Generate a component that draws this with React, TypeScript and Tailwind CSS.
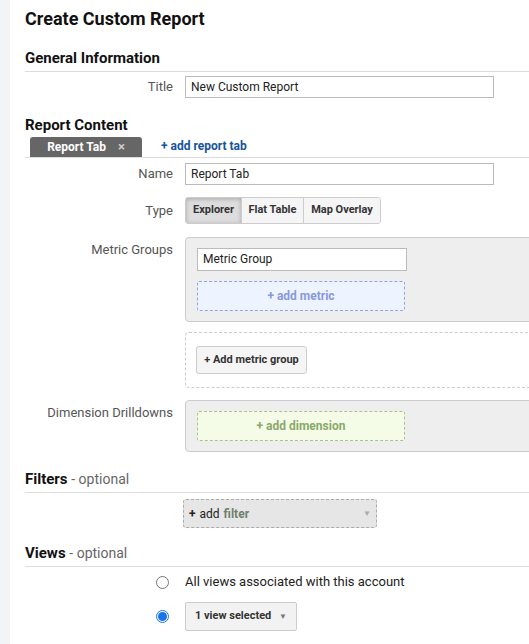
import React from 'react'

const font = { fontFamily: 'Roboto, "Liberation Sans", sans-serif' }

function Label({ children }: { children: React.ReactNode }) {
  return <div className="w-[160px] shrink-0 text-right pr-3 text-[13px] text-[#555]">{children}</div>
}

export default function App() {
  return (
    <div className="flex min-h-[644px] bg-white text-[#222]" style={font}>
      <div className="w-[10px] shrink-0 bg-[#f3f4f6]" />
      <div className="flex-1 pl-[15px] overflow-hidden">
        <h1 className="text-[18px] font-bold text-[#111] mt-[7px] leading-6">Create Custom Report</h1>

        <h2 className="mt-[17px] text-[15px] font-bold text-[#111] leading-5 border-b border-[#ddd] pb-[3px]">General Information</h2>
        <div className="flex items-center mt-[4px]">
          <Label>Title</Label>
          <div className="w-[309px] h-[22px] border border-[#bbb] px-[5px] text-[12px] leading-[20px]">New Custom Report</div>
        </div>

        <h2 className="mt-[17px] text-[15px] font-bold text-[#111] leading-5">Report Content</h2>
        <div className="flex items-end border-b border-[#ddd] mt-[2px]">
          <div className="ml-[5px] w-[112px] h-[20px] bg-[#666] rounded-t-[3px] text-white text-[12px] font-bold flex items-center justify-center gap-3">
            <span>Report Tab</span><span className="text-[#ccc] text-[13px]">×</span>
          </div>
          <div className="ml-[19px] mb-[2px] text-[12px] font-bold text-[#15539e]">+ add report tab</div>
        </div>

        <div className="flex items-center mt-[5px]">
          <Label>Name</Label>
          <div className="w-[309px] h-[22px] border border-[#bbb] px-[5px] text-[12px] leading-[20px]">Report Tab</div>
        </div>

        <div className="flex items-center mt-[12px]">
          <Label>Type</Label>
          <div className="flex h-[27px] border border-[#ccc] rounded-[3px] text-[11px] font-bold text-[#333] overflow-hidden">
            <div className="w-[55px] flex items-center justify-center bg-[#ddd] shadow-[inset_0_1px_4px_rgba(0,0,0,0.25)]">Explorer</div>
            <div className="w-[62px] flex items-center justify-center bg-[#f5f5f5] border-l border-[#ccc]">Flat Table</div>
            <div className="w-[77px] flex items-center justify-center bg-[#f5f5f5] border-l border-[#ccc]">Map Overlay</div>
          </div>
        </div>

        <div className="flex items-start mt-[13px]">
          <div className="pt-[3px]"><Label>Metric Groups</Label></div>
          <div className="flex-1 -mr-[10px] h-[85px] bg-[#eee] border border-[#ccc] rounded-[4px] pl-[11px] pt-[10px]">
            <div className="w-[210px] h-[23px] bg-white border border-[#bbb] px-[5px] text-[12px] leading-[21px]">Metric Group</div>
            <div className="mt-[10px] w-[208px] h-[30px] bg-[#eef4ff] border border-dashed border-[#8ea4e6] rounded-[2px] flex items-center justify-center text-[12px] font-bold text-[#8799e0]">+ add metric</div>
          </div>
        </div>

        <div className="flex mt-[10px]">
          <div className="w-[160px] shrink-0" />
          <div className="flex-1 -mr-[10px] h-[56px] border border-dashed border-[#ccc] rounded-[4px] pl-[10px] pt-[13px]">
            <div className="w-[111px] h-[28px] bg-[#f5f5f5] border border-[#ccc] rounded-[3px] flex items-center justify-center text-[11px] font-bold text-[#333]">+ Add metric group</div>
          </div>
        </div>

        <div className="flex items-start mt-[12px]">
          <div className="pt-[3px]"><Label>Dimension Drilldowns</Label></div>
          <div className="flex-1 -mr-[10px] h-[52px] bg-[#eee] border border-[#ccc] rounded-[4px] pl-[11px] pt-[10px]">
            <div className="w-[208px] h-[30px] bg-[#f4fce8] border border-dashed border-[#a8c488] rounded-[2px] flex items-center justify-center text-[12px] font-bold text-[#8aa86a]">+ add dimension</div>
          </div>
        </div>

        <h2 className="mt-[17px] text-[15px] text-[#111] leading-5 border-b border-[#ddd] pb-[3px]"><b>Filters</b> <span className="text-[#666] text-[14px]">- optional</span></h2>
        <div className="flex mt-[6px]">
          <div className="w-[158px] shrink-0" />
          <div className="w-[194px] h-[29px] bg-[#e6e6e6] border border-dashed border-[#aaa] rounded-[3px] flex items-center px-[5px] text-[12px]">
            <span className="font-bold text-[#222]">+</span><span className="ml-1 text-[#222]">add</span><span className="ml-1 font-bold text-[#6f7f6f]">filter</span>
            <span className="ml-auto text-[#aaa] text-[8px]">▼</span>
          </div>
        </div>

        <h2 className="mt-[15px] text-[15px] text-[#111] leading-5 border-b border-[#ddd] pb-[3px]"><b>Views</b> <span className="text-[#666] text-[14px]">- optional</span></h2>
        <div className="flex items-center mt-[8px] h-[14px]">
          <div className="w-[131px] shrink-0" />
          <div className="w-[13px] h-[13px] rounded-full border border-[#777] bg-white" />
          <span className="ml-[16px] text-[13px] text-[#222]">All views associated with this account</span>
        </div>
        <div className="flex items-center mt-[13px]">
          <div className="w-[131px] shrink-0" />
          <div className="w-[13px] h-[13px] rounded-full border border-[#1a73e8] flex items-center justify-center">
            <div className="w-[9px] h-[9px] rounded-full bg-[#1a73e8]" />
          </div>
          <div className="ml-[16px] w-[112px] h-[29px] bg-[#f2f2f2] border border-[#ccc] rounded-[2px] flex items-center px-[9px] text-[11px] font-bold text-[#333]">
            1 view selected<span className="ml-auto text-[#777] text-[8px]">▼</span>
          </div>
        </div>
      </div>
    </div>
  )
}
